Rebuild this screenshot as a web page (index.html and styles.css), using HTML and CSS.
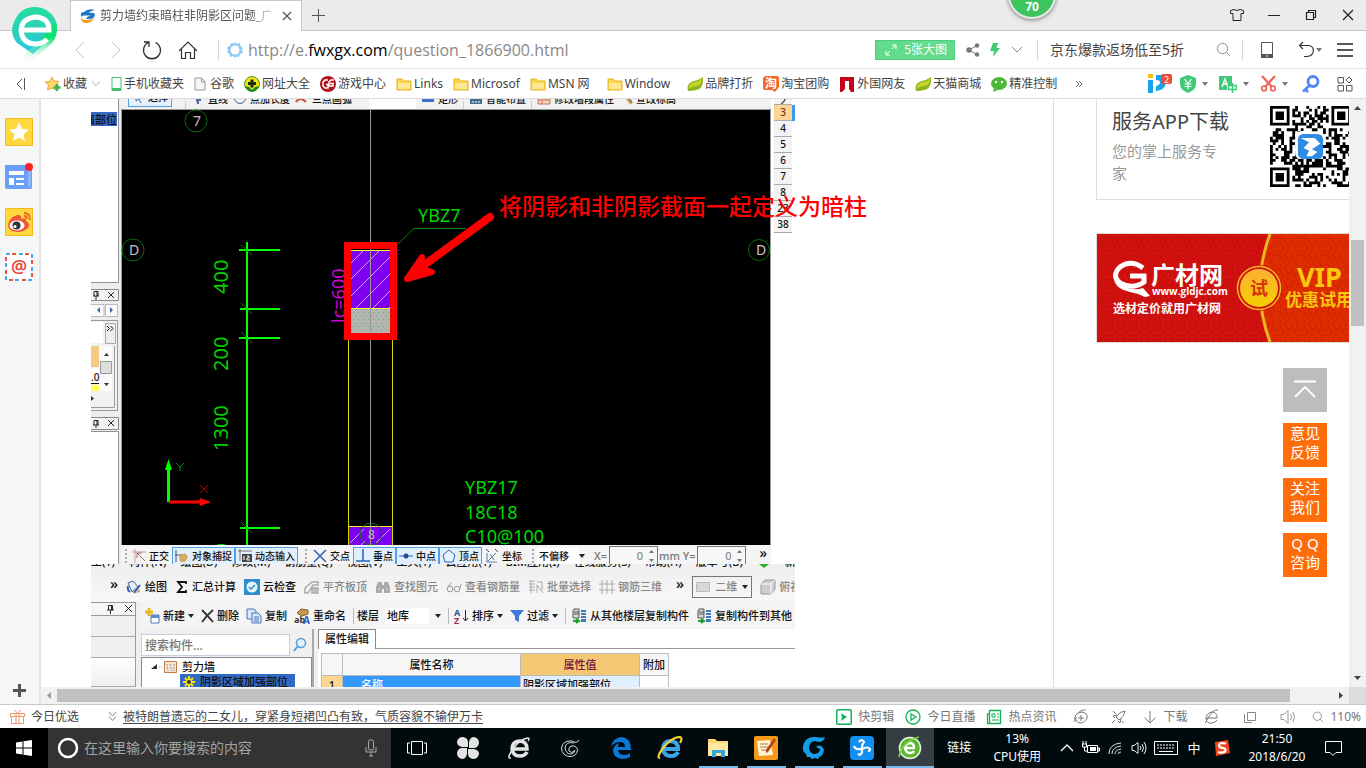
FILE: index.html
```html
<!DOCTYPE html>
<html lang="zh-CN">
<head>
<meta charset="utf-8">
<title>剪力墙约束暗柱非阴影区问题_广联达服务新干线</title>
<link rel="stylesheet" href="styles.css">
</head>
<body>
<svg class="sprite" aria-hidden="true">
  <symbol id="folder" viewBox="0 0 16 16"><path d="M1 3h5l2 2h7v9H1z" fill="#fbd84b" stroke="#e8b021"/><path d="M2 7h12v6H2z" fill="#ffe893"/></symbol>
  <symbol id="caret" viewBox="0 0 6 6"><path d="M0 1h6L3 5z" fill="currentColor"/></symbol>
  <symbol id="chev" viewBox="0 0 12 12"><path d="M1 3l5 5 5-5" fill="none" stroke="currentColor"/></symbol>
  <symbol id="leaf" viewBox="0 0 16 16"><path d="M1 15Q-1 7 7 5q5-1 9-4 1 12-7 13-4 1-8 1z" fill="#8fb31c"/><path d="M2 10q3-4 7-4 4-1 6-4 0 7-5 8-5 0-8 3z" fill="#c8d42e"/></symbol>
  <symbol id="mag" viewBox="0 0 16 16"><circle cx="7" cy="7" r="5.5" fill="none" stroke="currentColor"/><path d="M11 11l4 4" stroke="currentColor"/></symbol>
  <symbol id="floorcopy" viewBox="0 0 16 16"><path d="M3 1h5v9H2V3z" fill="#d8d8d8" stroke="#555"/><path d="M3 4h5M3 6h5" stroke="#555"/><path d="M10 2h5v2h-5zM10 5h5v2h-5zM10 8h5v2h-5zM10 11h5v3h-5z" fill="#3f79b8"/><path d="M2 13h5M5 11l3 2-3 2" stroke="#1ea12e" stroke-width="2" fill="none"/></symbol>
</svg>

<header class="browser">
  <div class="titlebar">
    <div class="tab">
      <svg width="16" height="16" viewBox="0 0 16 16"><path d="M4 4Q8 0 15 2 10 3 9 5q4-1 6 1 0 5-6 5H6q1-3 5-3.500H3Q2 9 1 8 0 4 4 4z" fill="#1d78c8"/><path d="M1 9q2 4 7 3 4 0 6-2-2 5-8 5-5 0-5-6z" fill="#f39a1e"/></svg>
      <span class="tab-title">剪力墙约束暗柱非阴影区问题_广</span>
      <button class="plain" aria-label="关闭标签"><svg width="10" height="10" viewBox="0 0 10 10"><path d="M1 1l8 8M9 1L1 9" stroke="#555" stroke-width="1.3"/></svg></button>
    </div>
    <button class="plain newtab" aria-label="新标签"><svg width="13" height="13" viewBox="0 0 13 13"><path d="M6.500 0v13M0 6.500h13" stroke="#555"/></svg></button>
    <div class="speed">70</div>
    <div class="winbtns">
      <button class="plain" aria-label="皮肤"><svg width="14" height="14" viewBox="0 0 14 14"><path d="M4 1.500q3 2 6 0l3.500 1v3H11v7H3v-7H.5v-3z" fill="none" stroke="#222"/></svg></button>
      <button class="plain" aria-label="最小化"><svg width="14" height="14" viewBox="0 0 14 14"><path d="M1 7.500h12" stroke="#222"/></svg></button>
      <button class="plain" aria-label="还原"><svg width="14" height="14" viewBox="0 0 14 14"><path d="M2.500 4.500h7v7h-7zM4.500 4V2.500h7v7H10" fill="none" stroke="#222" stroke-width="1.200"/></svg></button>
      <button class="plain" aria-label="关闭"><svg width="14" height="14" viewBox="0 0 14 14"><path d="M2 2l10 10M12 2L2 12" stroke="#222" stroke-width="1.300"/></svg></button>
    </div>
  </div>
  <svg class="logo" width="46" height="56" viewBox="0 0 46 56">
    <defs>
      <linearGradient id="lg1" x1="0" y1="0" x2="0" y2="1"><stop offset="0" stop-color="#25dca0"/><stop offset=".5" stop-color="#2bd0b8"/><stop offset="1" stop-color="#27c7ee"/></linearGradient>
      <linearGradient id="lg2" x1="0" y1="0" x2="0" y2="1"><stop offset=".4" stop-color="#0ee271"/><stop offset="1" stop-color="#d8fbe6" stop-opacity="0"/></linearGradient>
    </defs>
    <path d="M2 15Q8 0 23 0q13 0 20 12 3 7 1 15L21 47 5 36Q-3 26 2 15z" fill="url(#lg1)"/>
    <path d="M44 14q4 17-8 26L19 55l-9-1 5-9 18-17z" fill="url(#lg2)"/>
    <path d="M11 23h26q0-12-13-13-14 1-15 13 1 14 15 14 7 0 11-5" fill="none" stroke="#fff" stroke-width="5"/>
  </svg>
  <div class="addressbar">
    <button class="plain" aria-label="后退"><svg width="20" height="20" viewBox="0 0 20 20"><path d="M14 2L6 10l8 8" fill="none" stroke="#c4c4c4"/></svg></button>
    <button class="plain" aria-label="前进"><svg width="20" height="20" viewBox="0 0 20 20"><path d="M6 2l8 8-8 8" fill="none" stroke="#c4c4c4"/></svg></button>
    <button class="plain" aria-label="刷新"><svg width="20" height="20" viewBox="0 0 20 20"><path d="M13.500 2.500a8.500 8.500 0 1 1-7 0M2 2h5v5" fill="none" stroke="#333" stroke-width="1.300"/></svg></button>
    <button class="plain" aria-label="主页"><svg width="20" height="20" viewBox="0 0 20 20"><path d="M1 11l9-9 9 9M3.500 9v9.500h4v-6h5v6h4V9" fill="none" stroke="#333" stroke-width="1.200"/></svg></button>
    <i class="sep url-sep"></i>
    <svg width="16" height="16" viewBox="0 0 16 16"><path d="M8 0l2 2 3-1 .5 3 2.500 2-1 2 1 3-3 1-1 3-3-.5L8 16l-2-2-3 1-.5-3L0 10l1-2-1-3 3-1 1-3 3 .5z" fill="#8ecbf6"/><circle cx="8" cy="8" r="4.500" fill="#fff"/></svg>
    <div class="url" role="textbox" aria-label="地址" contenteditable="true">http://e.<b>fwxgx.com</b>/question_1866900.html</div>
    <button class="bigpics"><svg width="12" height="12" viewBox="0 0 12 12"><path d="M7 1h4v4M11 1L7 5M1 7v4h4M1 11l4-4" fill="none" stroke="#fff"/></svg>5张大图</button>
    <button class="plain c22" aria-label="分享"><svg width="14" height="14" viewBox="0 0 14 14"><path d="M11 2.500L3 7l8 4.500" fill="none" stroke="#777"/><circle cx="11" cy="2.500" r="2.200" fill="#777"/><circle cx="3" cy="7" r="2.700" fill="#777"/><circle cx="11" cy="11.500" r="2.200" fill="#777"/></svg></button>
    <button class="plain c22" aria-label="加速"><svg width="12" height="14" viewBox="0 0 12 14"><path d="M4 0h5L7.500 5H11L4 14l1-6H1z" fill="#3ecb6b"/></svg></button>
    <button class="plain c22 grey" aria-label="更多"><svg width="12" height="12"><use href="#chev"/></svg></button>
    <i class="sep search-sep"></i>
    <input class="search" aria-label="搜索" value="京东爆款返场低至5折">
    <button class="plain c38 grey" aria-label="搜索"><svg width="15" height="15"><use href="#mag"/></svg></button>
    <i class="sep"></i>
    <button class="plain c48" aria-label="手机"><svg width="14" height="18" viewBox="0 0 14 18"><path d="M1.500 1.500h11v15h-11z" fill="none" stroke="#555"/><path d="M1 13h12v4H1z" fill="#555"/><path d="M6 15h2" stroke="#fff"/></svg></button>
    <button class="plain c38 dark" aria-label="撤销"><svg width="18" height="18" viewBox="0 0 18 18"><path d="M5 1L1.500 4.500 5 8M2 4.500h8q5 0 5.500 5Q15 15 9 15.500H6" fill="none" stroke="#333" stroke-width="1.200"/></svg><svg class="cr" width="6" height="6"><use href="#caret"/></svg></button>
    <button class="plain c32" aria-label="菜单"><svg width="16" height="16" viewBox="0 0 16 16"><path d="M0 2h16M0 8h16M0 14h16" stroke="#222" stroke-width="1.300"/></svg></button>
  </div>
  <nav class="bookmarks">
    <button class="plain hide" aria-label="收起"><svg width="10" height="12" viewBox="0 0 10 12"><path d="M6 1L1 6l5 5M8.500 0v12" fill="none" stroke="#555"/></svg></button>
    <a href="#"><svg width="16" height="16" viewBox="0 0 16 16"><path d="M7 1l2 4 5 .6L10.500 9l1 5L7 12l-4.500 2 1-5L0 6l5-.7z" fill="#ffd96a" stroke="#eba63f"/><path d="M12 8v7M8.500 11.500h7" stroke="#3cb54a" stroke-width="2.500"/></svg>收藏<svg class="drop" width="10" height="10"><use href="#chev"/></svg></a>
    <a href="#"><svg width="11" height="16" viewBox="0 0 11 16"><path d="M1 1.500h9v13H1z" fill="#fff" stroke="#41c071"/><path d="M1 12h9v2.500H1z" fill="#41c071"/></svg>手机收藏夹</a>
    <a href="#"><svg class="page" width="12" height="14" viewBox="0 0 12 14"><path d="M1 1h6.500L11 4.500V13H1zM7.500 1v4H11" fill="#f6f6f6" stroke="#999"/></svg>谷歌</a>
    <a href="#"><svg width="16" height="16" viewBox="0 0 16 16"><circle cx="8" cy="8" r="7.500" fill="#f5df10" stroke="#4a9a20"/><path d="M1 10q2 5 7 5.500 5-.5 7-5.500l-4 1-3 3-3-3z" fill="#118b32"/><path d="M8 3.500v8M4 7.500h8" stroke="#153015" stroke-width="3"/></svg>网址大全</a>
    <a href="#"><svg width="16" height="16" viewBox="0 0 16 16"><circle cx="8" cy="8" r="8" fill="#b3101b"/><path d="M8 4H5L3 6v4l2 2h3V8.500H6M14 4h-3L9 6v4h4V7.500h-3" fill="none" stroke="#fff" stroke-width="1.500"/></svg>游戏中心</a>
    <a href="#"><svg width="16" height="16"><use href="#folder"/></svg>Links</a>
    <a href="#"><svg width="16" height="16"><use href="#folder"/></svg>Microsof</a>
    <a href="#" class="pad"><svg width="16" height="16"><use href="#folder"/></svg>MSN 网</a>
    <a href="#" class="pad"><svg width="16" height="16"><use href="#folder"/></svg>Window</a>
    <a href="#"><svg width="16" height="16"><use href="#leaf"/></svg>品牌打折</a>
    <a href="#"><svg width="16" height="16" viewBox="0 0 16 16"><path d="M2 0h12q2 0 2 2v9l-4 5-3-2H2q-2 0-2-2V2z" fill="#f4682a"/><text x="2" y="12" font-size="12" font-weight="700" fill="#fff">淘</text></svg>淘宝团购</a>
    <a href="#"><svg width="16" height="16" viewBox="0 0 16 16"><path d="M1 1h14v15h-3l-2-3V5H6v8l-3 3H1z" fill="#c1061a"/></svg>外国网友</a>
    <a href="#"><svg width="16" height="16"><use href="#leaf"/></svg>天猫商城</a>
    <a href="#"><svg width="16" height="16" viewBox="0 0 16 16"><ellipse cx="8" cy="7.500" rx="8" ry="6.500" fill="#4db838"/><path d="M3 12l-1 4 5-2z" fill="#4db838"/><circle cx="5" cy="6" r="1.200" fill="#fff"/><circle cx="11" cy="6" r="1.200" fill="#fff"/></svg>精准控制</a>
    <button class="plain more" aria-label="更多书签"><svg width="8" height="8" viewBox="0 0 8 8"><path d="M1 1l3 3-3 3M4 1l3 3-3 3" fill="none" stroke="#666"/></svg></button>
    <div class="tools">
      <button class="plain c28" aria-label="iP"><svg width="24" height="20" viewBox="0 0 24 20"><path d="M0 0h5v4H0z" fill="#f8bd12"/><path d="M0 6h5v13H0z" fill="#17a4ea"/><path d="M8 1h5v5l5 3q-1 7-10 8v-5q4-1 4-4 0-2-4-2z" fill="#17a4ea"/><rect x="13" y="0" width="11" height="10" rx="2" fill="#ee4d35"/><text x="16" y="9" font-size="9" fill="#fff">2</text></svg></button>
      <button class="plain c40" aria-label="支付"><svg width="16" height="18" viewBox="0 0 16 18"><path d="M8 0l8 3v6q0 6-8 9-8-3-8-9V3z" fill="#3fc978"/><path d="M4.500 4L8 8.500 11.500 4M8 8v6M4.500 9h7M4.500 11.500h7" fill="none" stroke="#fff" stroke-width="1.200"/></svg><svg class="cr" width="6" height="6"><use href="#caret"/></svg></button>
      <button class="plain c40" aria-label="翻译"><svg width="18" height="18" viewBox="0 0 18 18"><path d="M0 1h13v9H8v5H0z" fill="#3fc978"/><path d="M3 12L6 4l3 8M4 9h4" fill="none" stroke="#fff" stroke-width="1.400"/><path d="M9.500 10.500h8v4h-8zM13.500 8v10" fill="none" stroke="#3fc978" stroke-width="1.600"/></svg><svg class="cr" width="6" height="6"><use href="#caret"/></svg></button>
      <button class="plain c40" aria-label="截图"><svg width="15" height="17" viewBox="0 0 15 17"><path d="M1 1l10 11M14 1L4 12" stroke="#f2675c" stroke-width="2.400"/><circle cx="3" cy="13.500" r="2.300" fill="none" stroke="#f2675c" stroke-width="1.800"/><circle cx="12" cy="13.500" r="2.300" fill="none" stroke="#f2675c" stroke-width="1.800"/></svg><svg class="cr" width="6" height="6"><use href="#caret"/></svg></button>
      <button class="plain c34" aria-label="密码"><svg width="18" height="18" viewBox="0 0 18 18"><circle cx="11" cy="6.500" r="5" fill="none" stroke="#4f86f7" stroke-width="2.800"/><path d="M7.500 10.500L1 16.500M3 14l3 3" stroke="#4f86f7" stroke-width="2.600"/></svg></button>
      <button class="plain c34" aria-label="扩展"><svg width="16" height="16" viewBox="0 0 16 16"><path d="M1 1.500h5.500V7H1zM1 9.500h5.500V15H1zM9.500 9.500H15V15H9.500zM12 1l3 3-3 3-3-3z" fill="none" stroke="#555"/></svg></button>
    </div>
  </nav>
</header>

<div class="workspace">
  <aside class="rail">
    <button class="plain" aria-label="收藏"><svg width="28" height="28" viewBox="0 0 28 28"><path d="M.5.5h27v27H.5z" fill="#ffd83f" stroke="#f6b71f"/><path d="M14 4l3 7 7 .6-5.500 4.800L20 23l-6-3.500L8 23l1.500-6.600L4 11.600l7-.6z" fill="#fff"/></svg></button>
    <button class="plain" aria-label="新闻"><svg width="28" height="28" viewBox="0 0 28 28"><path d="M0 2h27v23q0 1-2 1H2q-2 0-2-2z" fill="#6b9ffb"/><path d="M23 5h3v19h-3z" fill="#8db6fd"/><path d="M4 8h15v4H4zM4 15h5v7H4zM11 15h8v2h-8zM11 20h8v2h-8z" fill="#fff"/><circle cx="24" cy="4" r="4" fill="#ff2222"/></svg></button>
    <button class="plain" aria-label="微博"><svg width="28" height="28" viewBox="0 0 28 28"><path d="M.5.5h27v27H.5z" fill="#ffd83f" stroke="#f6b71f"/><path d="M3 17Q5 8 13 7q4 0 3 4 6-2 5 2 5 3 2 7-4 4-11 4-9-1-9-7z" fill="#f0553a"/><ellipse cx="12" cy="17.500" rx="7.500" ry="5" fill="#fff"/><circle cx="11.500" cy="17.500" r="4" fill="#333"/><circle cx="10" cy="18.500" r="1.500" fill="#fff"/><path d="M19 5q6 0 6 7M19 8q3 0 3 3" fill="none" stroke="#e6682d" stroke-width="1.800"/></svg></button>
    <button class="plain" aria-label="邮箱"><svg width="28" height="28" viewBox="0 0 28 28"><path d="M0 0h28v28H0z" fill="#fff"/><g fill="none" stroke-width="2"><rect x="1" y="1" width="26" height="26" stroke="#49a7f0" stroke-dasharray="4 9"/><rect x="1" y="1" width="26" height="26" stroke="#f0513c" stroke-dasharray="4 9" stroke-dashoffset="-6"/></g><text x="6" y="20" font-size="18" font-weight="600" fill="#e84a37">@</text></svg></button>
    <button class="plain add" aria-label="添加"><svg width="13" height="13" viewBox="0 0 13 13"><path d="M6.500 0v13M0 6.500h13" stroke="#555" stroke-width="3"/></svg></button>
  </aside>

  <main class="viewport">
    <div class="pagewrap">
      <article class="answer">
        <figure class="shot">
          <div class="cad">
            <svg class="dock" width="30" height="465" viewBox="91 99 30 465">
              <path d="M91 99h30v465H91z" fill="#ededed"/>
              <path d="M91 99h27v183H91zM91 432h27v132H91z" fill="#fff"/>
              <path d="M118.500 99v183.500H91M118.500 564V431.500H91" fill="none" stroke="#8f9099"/>
              <path d="M91 112h26v14H91z" fill="#316ac5"/>
              <text x="84" y="123.500" font-size="11" fill="#111">强部位</text>
              <g fill="none" stroke="#8b8b8b"><path d="M90 289.500h28.500v11H90zM90 417.500h28.500v12H90z" fill="#f3f3f3"/><path d="M90 304.500h14v12H90zM105.500 304.500h12v12h-12z" fill="#fafafa" stroke="#bbb"/></g>
              <g fill="none" stroke="#222"><path d="M108 292l6 6M114 292l-6 6M93 296h6M94 296v-4.500h4V296M97 291v5M96 296v4M108 420l6 6M114 420l-6 6M93 425h6M94 425v-4.500h4V425M97 420v5M96 425v3"/></g>
              <path d="M100 307v6l-3-3zM110 307v6l3-3z" fill="#3568a8"/>
              <path d="M91 320.500h26.500v90H91" fill="#f1f1f1" stroke="#999"/>
              <path d="M91 322h12v21H91zM91 368h8v16h-8z" fill="#fff"/>
              <path d="M105.500 323.500h10v20h-10z" fill="#eee" stroke="#aaa"/>
              <path d="M107 326l2.500 2.500-2.500 2.500M110.500 326l2.500 2.500-2.500 2.500" fill="none" stroke="#111"/>
              <path d="M91 346h8v21h-8z" fill="#f5c983"/><path d="M91 385h8v6h-8z" fill="#ffff66"/><path d="M91 383.500h8" stroke="#111"/>
              <path d="M99 346h13v45H99z" fill="#fafafa"/><path d="M100.500 361.500h11v12h-11z" fill="#ddd" stroke="#999"/>
              <path d="M104 356h5l-2.500-3zM104 383h5l-2.500 3zM91 396v5l3-2.500z" fill="#333"/>
              <text x="91" y="381" font-size="10" fill="#111">.0</text>
              <path d="M91 407.500h23.500V346" fill="none" stroke="#999"/>
            </svg>
            <div class="stage">
              <div class="topbar">
                <b class="on"><svg width="14" height="12" viewBox="0 0 14 12"><path d="M5 0v10l3-2 2 4" fill="none" stroke="#4a6fa5"/></svg>选择</b><i></i><b><svg width="14" height="12" viewBox="0 0 14 12"><path d="M4 3h6v5H8v3H6z" fill="#5470a5"/></svg>直线</b><b><svg width="14" height="12" viewBox="0 0 14 12"><circle cx="7" cy="5" r="5.500" fill="none" stroke="#3e5c96"/><path d="M7 0v6" stroke="#3e5c96"/></svg>点加长度</b><b><svg width="14" height="12" viewBox="0 0 14 12"><path d="M1 9q4-6 10 0" fill="none" stroke="#c85545" stroke-width="2"/></svg>三点画弧</b><span class="well"></span><b><svg width="14" height="12" viewBox="0 0 14 12"><path d="M1 2h12v7H1z" fill="#3b6fd0"/></svg>矩形</b><i></i><b><svg width="14" height="12" viewBox="0 0 14 12"><path d="M1 2h12v9H1z" fill="#4a6a90"/><path d="M3 9h2M6 9h2M9 9h2M6 4h5" stroke="#fff"/></svg>智能布置</b><i></i><b><svg width="14" height="12" viewBox="0 0 14 12"><path d="M1 2h12v9H1z" fill="#f6d3bb" stroke="#c7764f"/><path d="M1 7h12M5 7v4M9 3v4" stroke="#c7764f"/></svg>修改墙段属性</b><b><svg width="14" height="12" viewBox="0 0 14 12"><path d="M2 3h6l5 7" fill="none" stroke="#6f7590" stroke-width="2"/><path d="M8 6l4 5" stroke="#dba33a" stroke-width="2"/></svg>查改标高</b>
              </div>
              <svg class="drawing" width="650" height="436" viewBox="121 109 650 436">
                <defs>
                  <pattern id="dots" width="5" height="7" patternUnits="userSpaceOnUse"><path d="M1 1h1v1H1zM3 4h1v1H3z" fill="#4fc04f"/></pattern>
                  <clipPath id="hatchclip"><path d="M351 250h39v58h-39z"/></clipPath>
                </defs>
                <path d="M121 109h650v436H121z" fill="#000"/>
                <path d="M121 109.500h649.500V545" fill="none" stroke="#999"/>
                <path d="M121.500 109v436" stroke="#999"/>
                <g fill="none" stroke="#0b6b0b"><circle cx="196" cy="121" r="11"/><circle cx="133" cy="250" r="11"/><circle cx="759" cy="250" r="10.500"/></g>
                <g class="axis" fill="#c6c6c6"><text x="193" y="126">7</text><text x="129" y="255">D</text><text x="756" y="255">D</text></g>
                <g stroke="#0f0" stroke-width="2"><path d="M247 242v303M239 250h41M240 309h40M239 338h41M240 528h40"/></g>
                <g stroke="#0a7a0a"><path d="M241 245l11 10M241 303l11 11M241 332l11 11M241 522l11 11"/></g>
                <g class="dim" fill="#00d000"><text transform="translate(228 294) rotate(-90)">400</text><text transform="translate(228 371) rotate(-90)">200</text><text transform="translate(228 451) rotate(-90)">1300</text><text transform="translate(228 566) rotate(-90)">00</text></g>
                <text class="lbl" fill="#d400d4" transform="translate(345 323) rotate(-90)">lc=600</text>
                <path d="M397 245l17-16.500h52" fill="none" stroke="#0a8a0a"/>
                <g class="lbl" fill="#00d800"><text x="418" y="222">YBZ7</text><text x="465" y="494">YBZ17</text><text x="465" y="519">18C18</text><text x="465" y="543">C10@100</text></g>
                <path d="M348.500 340v205M392.500 340v205" stroke="#d8d800"/>
                <path d="M349 527h43v18h-43z" fill="#7d00f0"/><path d="M348 526.500h45" stroke="#ee3"/><path d="M350 543l14-14M376 543l14-14M361 545l4-4" stroke="#c9a6ff"/>
                <circle cx="371" cy="534" r="11" fill="none" stroke="#0b6b0b"/><text x="368" y="539" font-size="12" fill="#c6c6c6">8</text>
                <path d="M348 246h45v91h-45z" fill="#000"/>
                <path d="M351 250h39v58h-39z" fill="#7d00f0"/>
                <path d="M351 309h39v24h-39z" fill="#b4b4b4"/><path d="M351 309h39v24h-39z" fill="url(#dots)"/>
                <path clip-path="url(#hatchclip)" d="M350 264l16-16M350 280l32-32M350 297l42-42M354 310l38-38M371 310l21-21M387 310l6-6" stroke="#c6a5ff"/>
                <path d="M351 250.500h39M351 308.500h39" stroke="#ffff30"/>
                <path d="M370.500 109v436" stroke="#999"/>
                <path d="M347.500 245.500h46v91h-46z" fill="none" stroke="#f00" stroke-width="7"/>
                <path d="M490 217l-74 54" stroke="#f00" stroke-width="8" stroke-linecap="round"/>
                <path d="M422 257l-15 22 25-7-9-3z" fill="#f00" stroke="#f00" stroke-width="6" stroke-linejoin="round"/>
                <path d="M168.500 502v-34" stroke="#0f0" stroke-width="3"/><path d="M165 470l3.500-11 3.500 11z" fill="#0f0"/>
                <path d="M169 502h34" stroke="#f00" stroke-width="3"/><path d="M200 498l11 4-11 4z" fill="#f00"/>
                <path d="M176 463l4 4 4-4M180 467v4" fill="none" stroke="#0a8a0a"/><path d="M200 485l8 8M208 485l-8 8" stroke="#b00000"/>
              </svg>
              <div class="snapbar">
                <i class="grip"></i>
                <button><svg width="14" height="14" viewBox="0 0 14 14"><path d="M0 3h14M3 0v14" stroke="#c99"/><path d="M5 4l8 8M5 4v5M5 4h5" stroke="#a66" fill="none"/></svg>正交</button>
                <button class="on"><svg width="14" height="14" viewBox="0 0 14 14"><path d="M1 1v12M0 6h8" stroke="#555"/><path d="M4 8l6-4 3 4-3 5H5z" fill="#d9ab5b"/></svg>对象捕捉</button>
                <button class="on"><svg width="14" height="14" viewBox="0 0 14 14"><path d="M0 2h14M2 0v12" stroke="#777"/><path d="M4 5h10v8H4z" fill="#444"/><path d="M6 7v4M9 7h2v2H9v2h3" stroke="#fff" fill="none"/></svg>动态输入</button>
                <i class="grip"></i>
                <button><svg width="14" height="14" viewBox="0 0 14 14"><path d="M1 1l12 12M13 1L1 13" stroke="#2d62b5" stroke-width="1.500"/></svg>交点</button>
                <button class="on"><svg width="14" height="14" viewBox="0 0 14 14"><path d="M7 0v12M0 12h14" stroke="#2d62b5" stroke-width="1.500"/></svg>垂点</button>
                <button class="on"><svg width="14" height="14" viewBox="0 0 14 14"><path d="M0 7h14" stroke="#2d62b5"/><circle cx="7" cy="7" r="2.500" fill="#234a91"/></svg>中点</button>
                <button class="on"><svg width="14" height="14" viewBox="0 0 14 14"><path d="M7 1l6 5-2 7H3L1 6z" fill="#e8f2ff" stroke="#2d62b5"/></svg>顶点</button>
                <button><svg width="14" height="14" viewBox="0 0 14 14"><path d="M2 4v9h10M3 12l8-8M5 5l4 6" stroke="#557fb5" fill="none"/><path d="M1 0l3 3M10 0l3 3" stroke="#444"/></svg>坐标</button>
                <i class="grip"></i>
                <select aria-label="偏移"><option>不偏移</option></select><svg class="cr" width="6" height="6"><use href="#caret"/></svg>
                <label class="num">X=<input value="0"><svg width="5" height="14" viewBox="0 0 5 14"><path d="M0 4h5L2.500 1zM0 10h5l-2.500 3z" fill="#777"/></svg></label><label class="num">mm Y=<input value="0"><svg width="5" height="14" viewBox="0 0 5 14"><path d="M0 4h5L2.500 1zM0 10h5l-2.500 3z" fill="#777"/></svg></label>
                <span class="chevs">»</span>
              </div>
            </div>
            <table class="rows"><tbody>
              <tr class="cut"><td>2</td><td></td></tr><tr class="sel"><td>3</td><td></td></tr><tr><td>4</td><td></td></tr><tr><td>5</td><td></td></tr><tr><td>6</td><td></td></tr><tr><td>7</td><td></td></tr><tr><td>8</td><td></td></tr><tr><td>23</td><td></td></tr><tr><td>38</td><td></td></tr>
            </tbody></table>
          </div>
          <figcaption class="note">将阴影和非阴影截面一起定义为暗柱</figcaption>

          <div class="lower">
            <div class="menubar"><span>工(T)</span><span>构件(N)</span><span>绘图(D)</span><span>修改(M)</span><span>钢筋量(Q)</span><span>视图(V)</span><span>工具(T)</span><span>云应用(Y)</span><span>BIM应用(I)</span><span>在线服务(S)</span><span>帮助(H)</span><span>版本号(B)</span><svg width="14" height="8" viewBox="0 0 14 8"><path d="M2 4h10L7 8z" fill="#3aab2a"/></svg><span>新建变更</span></div>
            <div class="toolrow first">
              <span class="lead">»</span>
              <button><svg width="16" height="16" viewBox="0 0 16 16"><path d="M2 4l5-2 5 6-6 5z" fill="#e8eef8" stroke="#4a6285"/><path d="M4 13q-3-2-2-6M14 6l-6 8" stroke="#2f62b0" stroke-width="2" fill="none"/><path d="M10 14l4-1-1-3z" fill="#e0a030"/></svg>绘图</button>
              <button><svg width="14" height="16" viewBox="0 0 14 16"><path d="M11 5V3H3l4 5-4 5h8v-2" fill="none" stroke="#111" stroke-width="1.800"/></svg>汇总计算</button>
              <button><svg width="16" height="16" viewBox="0 0 16 16"><path d="M0 0h16v16H0z" fill="#2f8fce"/><circle cx="8" cy="8" r="5.500" fill="#e8f5fd"/><path d="M5 8l2 2 4-4" stroke="#2f8fce" stroke-width="1.500" fill="none"/></svg>云检查</button>
              <button class="off"><svg width="16" height="16" viewBox="0 0 16 16"><path d="M1 9l7-6h6v3H9l-5 8H1zM8 9h6v5H8zM10 9v5M12 9v5" fill="none" stroke="#aaa" stroke-width="1.500"/></svg>平齐板顶</button>
              <button class="off"><svg width="16" height="16" viewBox="0 0 16 16"><path d="M3 3h4v11H1V8zM9 3h4l2 5v6H9zM7 6h2v4H7z" fill="#aaa"/><path d="M3 10h2M11 10h2" stroke="#eee"/></svg>查找图元</button>
              <button class="off"><svg width="16" height="16" viewBox="0 0 16 16"><circle cx="4" cy="10" r="2.800" fill="none" stroke="#999"/><circle cx="11" cy="10" r="2.800" fill="none" stroke="#999"/><path d="M2 8l3-4M14 9l1-4" stroke="#999"/></svg>查看钢筋量</button>
              <button class="off"><svg width="16" height="16" viewBox="0 0 16 16"><path d="M1 2h6M1 5h6M1 8h6M1 11h6M3 2v12M9 6l6 8M9 3h5v8M9 6v8" fill="none" stroke="#aaa"/></svg>批量选择</button>
              <button class="off"><svg width="16" height="16" viewBox="0 0 16 16"><path d="M3 1v14M8 1v14M13 1v14M0 5h16M0 11h16" stroke="#aaa"/></svg>钢筋三维</button>
              <span class="chev2">»</span>
              <button class="off boxed"><svg width="14" height="10" viewBox="0 0 14 10"><path d="M.5.5h13v9H.5z" fill="#d8d8d8" stroke="#bbb"/></svg>二维<svg class="cr" width="6" height="6"><use href="#caret"/></svg></button>
              <button class="off"><svg width="16" height="16" viewBox="0 0 16 16"><path d="M1 5l4-4h10v9l-4 5H1z" fill="#ccc" stroke="#999"/><path d="M1 5h10v10M11 5l4-4" fill="none" stroke="#fff"/></svg>俯视</button>
            </div>
            <div class="panes">
              <div class="leftpane"><div class="cap"><svg width="26" height="12" viewBox="0 0 26 12"><path d="M1 7h7M2.500 7V2.500h4V7M5.500 2v5M4.500 7v4M19 2l7 7M26 2l-7 7" stroke="#222" fill="none"/></svg></div><p></p><p></p><p></p></div>
              <div class="rightpane">
                <div class="toolrow second">
                  <button><svg width="16" height="16" viewBox="0 0 16 16"><path d="M5 0v8M1 4h8" stroke="#e5bd2b" stroke-width="3"/><path d="M7 7h8v8H7z" fill="#fff" stroke="#5077b0"/><path d="M7 7h8v3H7z" fill="#5b8ed0"/></svg>新建<svg class="cr" width="6" height="6"><use href="#caret"/></svg></button>
                  <button><svg width="13" height="14" viewBox="0 0 13 14"><path d="M1 1q5 5 11 12M12 1Q6 6 1 13" stroke="#333" stroke-width="1.800" fill="none"/></svg>删除</button>
                  <button><svg width="16" height="16" viewBox="0 0 16 16"><path d="M1 1h7l2 2v8H1z" fill="#dce8fa" stroke="#4a72b5"/><path d="M6 5h6l3 3v7H6z" fill="#dce8fa" stroke="#4a72b5"/><path d="M8 9h5M8 11h5M8 13h5" stroke="#4a72b5"/></svg>复制</button>
                  <button><svg width="16" height="16" viewBox="0 0 16 16"><path d="M3 5l4-4 7 1v4L8 8z" fill="#c49a44" stroke="#7f6434"/><text x="0" y="15" font-size="9" font-weight="700" fill="#333">ab</text><text x="9" y="16" font-size="10" font-weight="700" fill="#2b5dc0">A</text></svg>重命名</button>
                  <label class="floor">楼层 <select aria-label="楼层"><option>地库</option></select><svg class="cr" width="6" height="6"><use href="#caret"/></svg></label>
                  <button class="bar"><svg width="15" height="16" viewBox="0 0 15 16"><text x="0" y="8" font-size="9" font-weight="700" fill="#2c4fa0">A</text><text x="0" y="16" font-size="9" font-weight="700" fill="#a03050">Z</text><path d="M11.500 2v11M9 10l2.500 3 2.500-3" stroke="#222" fill="none"/></svg>排序<svg class="cr" width="6" height="6"><use href="#caret"/></svg></button>
                  <button><svg width="14" height="14" viewBox="0 0 14 14"><path d="M0 1h14L9 7v6l-4-2V7z" fill="#3f7bd9"/></svg>过滤<svg class="cr" width="6" height="6"><use href="#caret"/></svg></button>
                  <button class="bar"><svg width="16" height="16"><use href="#floorcopy"/></svg>从其他楼层复制构件</button>
                  <button><svg width="16" height="16"><use href="#floorcopy"/></svg>复制构件到其他</button>
                </div>
                <div class="split">
                  <div class="tree">
                    <div class="find"><input aria-label="搜索构件" placeholder="搜索构件..."><svg width="16" height="16" viewBox="0 0 16 16"><circle cx="9" cy="6" r="4.500" fill="#e3f3fd" stroke="#4fa0d8" stroke-width="1.500"/><path d="M5.500 9.500L2 14" stroke="#4fa0d8" stroke-width="2"/></svg></div>
                    <div class="nodes">
                      <div class="node"><svg width="28" height="14" viewBox="0 0 28 14"><path d="M1 9h6V4z" fill="#333"/><path d="M9 7h4" stroke="#999" stroke-dasharray="1 1"/><path d="M14.500 1.500h12v11h-12z" fill="#f7e4d2" stroke="#c27a4a"/><path d="M17 4l1 7M20 4l2 7M24 4v7" stroke="#999" stroke-dasharray="2 1"/></svg>剪力墙</div>
                      <div class="node leafnode"><span><svg width="14" height="14" viewBox="0 0 14 14"><path d="M7 1v12M1 7h12M3 3l8 8M11 3l-8 8" stroke="#ffe800" stroke-width="2"/><circle cx="7" cy="7" r="2" fill="#333"/></svg>阴影区域加强部位</span></div>
                    </div>
                  </div>
                  <div class="props">
                    <div class="tabs"><span>属性编辑</span></div>
                    <table><thead><tr><th></th><th>属性名称</th><th class="hot">属性值</th><th>附加</th></tr></thead><tbody><tr><td class="n">1</td><td class="name">名称</td><td class="val">阴影区域加强部位</td><td></td></tr></tbody></table>
                  </div>
                </div>
              </div>
            </div>
          </div>
        </figure>
      </article>

      <aside class="side">
        <section class="app">
          <div><h2>服务APP下载</h2><p>您的掌上服务专家</p></div>
          <svg class="qr" width="81" height="81" viewBox="0 0 29 29"><path id="qr" fill="#000"/><rect x="9" y="9" width="10" height="10" rx="2" fill="#fff"/><rect x="10" y="10" width="9" height="9" rx="2" fill="#2e8be6"/><path d="M11 11.500h5l2 2-3 2 2 1-2 1.500h-2l1-2-2-1 2-2z" fill="#fff"/></svg>
        </section>
        <a href="#" class="banner" aria-label="广材网">
          <svg width="300" height="108" viewBox="0 0 300 108">
            <defs>
              <pattern id="swirl" width="24" height="14" patternUnits="userSpaceOnUse"><g fill="none" stroke="#7a0000" stroke-opacity=".16"><circle cx="12" cy="14" r="11"/><circle cx="12" cy="14" r="7"/><circle cx="12" cy="14" r="3"/><circle cx="0" cy="7" r="9"/><circle cx="24" cy="7" r="9"/><circle cx="0" cy="7" r="4"/><circle cx="24" cy="7" r="4"/></g></pattern>
              <linearGradient id="gold" x1="0" y1="0" x2="0" y2="1"><stop offset="0" stop-color="#fbb034"/><stop offset="1" stop-color="#f4d000"/></linearGradient>
            </defs>
            <path d="M0 0h300v108H0z" fill="#d3110f"/>
            <path d="M173 0q-20 54 0 108h127V0z" fill="#e22d00"/>
            <path d="M0 0h300v108H0z" fill="url(#swirl)"/>
            <path d="M173 0q-20 54 0 108" fill="none" stroke="#e9b81f" stroke-width="3"/>
            <circle cx="162" cy="54" r="23" fill="#d3110f"/><circle cx="162" cy="54" r="21.500" fill="none" stroke="#f1b822" stroke-width="1.500"/><circle cx="162" cy="54" r="19" fill="url(#gold)"/>
            <text x="153" y="61" font-size="18" font-weight="700" fill="#d8330a">试</text>
            <path d="M46 34Q34 25 23 33q-9 9 0 16 13 7 24-1v-6H33" fill="none" stroke="#fff" stroke-width="5"/><path d="M17 40q-2 14 16 18l8 2 7 3 5-1-7-8q-9 3-18-1-8-4-11-13z" fill="#fff"/>
            <g fill="#fff" font-weight="700"><text x="54" y="50" font-size="24">广材网</text><text class="site" x="55" y="61" font-size="10">www.gldjc.com</text><text x="16" y="79" font-size="12">选材定价就用广材网</text></g>
            <g fill="#f9c80e" font-weight="700"><text x="200" y="53" font-size="27">VIP</text><text x="188" y="72" font-size="17">优惠试用</text></g>
          </svg>
        </a>
      </aside>
      <div class="floaters">
        <button class="totop" aria-label="回到顶部"><svg width="24" height="20" viewBox="0 0 24 20"><path d="M1 1.500h22M2 17l10-10 10 10" fill="none" stroke="#fff" stroke-width="1.800"/></svg></button>
        <button>意见<br>反馈</button><button>关注<br>我们</button><button>Q Q<br>咨询</button>
      </div>
    </div>
    <div class="vbar"><svg width="9" height="6" viewBox="0 0 9 6"><path d="M1 5h7L4.500 1z" fill="#444"/></svg><i></i><svg width="9" height="6" viewBox="0 0 9 6"><path d="M1 1h7L4.500 5z" fill="#444"/></svg></div>
    <div class="hbar"><svg width="6" height="9" viewBox="0 0 6 9"><path d="M5 1v7L1 4.500z" fill="#999"/></svg><i></i><svg width="6" height="9" viewBox="0 0 6 9"><path d="M1 1v7l4-3.500z" fill="#444"/></svg></div>
    <div class="corner"></div>
  </main>
</div>

<footer class="status">
  <a href="#" class="pick"><svg width="15" height="15" viewBox="0 0 15 15"><path d="M.5 4.500h14v3H.5zM1.500 7.500h12v7h-12zM6 4v10M9 4v10M7.500 4L4 1M7.500 4L11 1" fill="none" stroke="#f1966f"/></svg>今日优选</a>
  <svg class="dd" width="9" height="9" viewBox="0 0 9 9"><path d="M1 0l3.500 4L8 0M1 4.500l3.500 4 3.500-4" fill="none" stroke="#888"/></svg>
  <a href="#" class="news">被特朗普遗忘的二女儿，穿紧身短裙凹凸有致，气质容貌不输伊万卡</a>
  <div class="st">
    <button class="plain"><svg width="16" height="16" viewBox="0 0 16 16"><rect x=".75" y=".75" width="14.500" height="14.500" rx="1" fill="none" stroke="#14b356" stroke-width="1.500"/><path d="M5 4l6 4-6 4 1-4z" fill="#14b356"/></svg>快剪辑</button>
    <button class="plain"><svg width="16" height="16" viewBox="0 0 16 16"><circle cx="8" cy="8" r="7" fill="none" stroke="#14b356" stroke-width="1.300"/><path d="M6 5l5 3-5 3z" fill="none" stroke="#14b356" stroke-width="1.300"/></svg>今日直播</button>
    <button class="plain"><svg width="16" height="16" viewBox="0 0 16 16"><path d="M3.500 1.500h11v13H1.500V5h2zM3.500 5v9" fill="none" stroke="#14b356" stroke-width="1.300"/><path d="M6 5h3v3H6zM11 5h2M11 8h2M6 11h7" stroke="#14b356" fill="none"/></svg>热点资讯</button>
    <button class="plain w27" aria-label="医生"><svg width="16" height="16" viewBox="0 0 16 16"><path d="M2 13Q0 4 9 3q6 1 5 6-2 5-7 5-5-1-4-6M3 6q5-6 10-5M8 6v6M5 9h6" fill="none" stroke="#777"/></svg></button>
    <button class="plain w27" aria-label="加速"><svg width="16" height="16" viewBox="0 0 16 16"><path d="M14 2q-5 0-9 6l3 3q6-4 6-9zM6 6L2 7l2 2M10 10l-1 4-2-2M4 11l-3 3M2 2l3 3M11 12l2 2" fill="none" stroke="#777"/></svg></button>
    <button class="plain"><svg width="14" height="14" viewBox="0 0 14 14"><path d="M7 1v12M1.500 7.500L7 13l5.500-5.500" fill="none" stroke="#777"/></svg>下载</button>
    <button class="plain w27" aria-label="内核"><svg width="16" height="16" viewBox="0 0 16 16"><path d="M3 9h10q0-6-5-6-6 1-6 7 1 5 6 4 3 0 5-3M2 13Q0 16 4 9q5-9 10-8" fill="none" stroke="#777"/></svg></button>
    <button class="plain w27" aria-label="窗口"><svg width="14" height="14" viewBox="0 0 14 14"><path d="M4.500 2.500h8v8h-8zM1.500 4v8.500H9" fill="none" stroke="#888"/></svg></button>
    <button class="plain w27" aria-label="静音"><svg width="16" height="16" viewBox="0 0 16 16"><path d="M1 5.500h3l4-4v13l-4-4H1zM10.500 5q2 3 0 6M13 3q3 5 0 10" fill="none" stroke="#999"/></svg></button>
    <button class="plain"><svg width="12" height="12"><use href="#mag"/></svg>110%</button>
  </div>
</footer>

<div class="taskbar">
  <button class="plain start" aria-label="开始"><svg width="16" height="16" viewBox="0 0 16 16"><path d="M0 2.500L6.500 1.500v6H0zM7.500 1.300L16 0v7.500H7.500zM0 8.500h6.500v6L0 13.500zM7.500 8.500H16V16l-8.500-1.200z" fill="#fff"/></svg></button>
  <label class="cortana"><svg width="22" height="22" viewBox="0 0 22 22"><circle cx="11" cy="11" r="9" fill="none" stroke="#fff" stroke-width="2.500"/></svg><input placeholder="在这里输入你要搜索的内容"><svg width="12" height="18" viewBox="0 0 12 18"><rect x="3.500" y="1" width="5" height="10" rx="1.500" fill="none" stroke="#aaa"/><path d="M1 8v5h10V8M6 13v4M4 17h4" fill="none" stroke="#aaa"/></svg></label>
  <div class="apps">
    <button class="plain w51" aria-label="任务视图"><svg width="22" height="16" viewBox="0 0 22 16"><path d="M5.500 1.500h11v13h-11zM4 3H1.500v10H4M18 3h2.500v10H18" fill="none" stroke="#fff"/></svg></button>
    <button class="plain w51" aria-label="应用"><svg width="22" height="22" viewBox="0 0 22 22"><g fill="#e4e4e4"><path d="M11 10H5Q0 9 0 5q1-5 6-5 5 1 5 5z"/><path d="M12 11V5q1-5 5-5 5 1 5 6-1 5-5 5z"/><path d="M11 12h6q5 1 5 5-1 5-6 5-5-1-5-5z"/><path d="M10 11v6q-1 5-5 5-5-1-5-6 1-5 5-5z"/></g></svg></button>
    <button class="plain w51" aria-label="浏览器"><svg width="22" height="22" viewBox="0 0 22 22"><path d="M5 12h14q0-8-8-8-7 1-7 8 1 7 8 7 5 0 7-4" fill="none" stroke="#e4e4e4" stroke-width="3.500"/><path d="M3 21Q-2 22 5 12q7-10 15-11 2 0 0 3" fill="none" stroke="#e4e4e4" stroke-width="1.500"/></svg></button>
    <button class="plain w51" aria-label="广联达"><svg width="20" height="20" viewBox="0 0 20 20"><path d="M19 2q-2 4-7 1-9-1-10.500 7Q2 18 10 18.500q7 0 7.500-7Q16 7 11 8q-3 2-2 5 3 3 5 0M14 5Q6 3 5 10q1 6 6 6 4-1 4-4" fill="none" stroke="#ddd"/></svg></button>
    <button class="plain w51" aria-label="Edge"><svg width="22" height="22" viewBox="0 0 22 22"><path d="M1 10Q3 0 12 0q9 1 9 13H8q1 5 6 5 4 0 6-2v4q-3 2-8 2-9-1-9-9 1-5 6-7-1 2-1 4h7q0-5-5-5-6 0-9 5z" fill="#0a78d7"/></svg></button>
    <button class="plain w48" aria-label="IE"><svg width="26" height="24" viewBox="0 0 26 24"><path d="M6 13h15q0-8-8-8-7 1-7 8 1 7 8 7 5 0 7-4" fill="none" stroke="#3ba4ea" stroke-width="4"/><path d="M3 22Q-1 22 6 12q9-11 17-11 3 1 0 6" fill="none" stroke="#f4cf32" stroke-width="2.200"/></svg></button>
    <button class="plain w48 run" aria-label="资源管理器"><svg width="22" height="20" viewBox="0 0 22 20"><path d="M1 1h7l2 2h11v15H1z" fill="#fbd774"/><path d="M1 5h20v13H1z" fill="#ffe9a0"/><path d="M5 12h13v7h-4v-4H9v4H5z" fill="#35a7dd"/></svg></button>
    <button class="plain w48 run" aria-label="便笺"><svg width="24" height="24" viewBox="0 0 24 24"><rect width="24" height="24" rx="2" fill="#f59a1c"/><path d="M3 5l13-1 3 15-14 1z" fill="#fff4d5"/><path d="M6 8h8M6 11h9M7 14h8" stroke="#b57b3c"/><path d="M20 2l2 2-8 12-2 1v-3z" fill="#b34415"/></svg></button>
    <button class="plain w48 run" aria-label="广联达客户端"><svg width="24" height="24" viewBox="0 0 24 24"><path d="M23 1q-2 7-10 4-6 1-6 7 1 6 6 6 5-1 5-5l-4-2q5-4 8 3-1 6-5 7l-1 2-3-1-3 1-2-2H5l-1-3q-4-3-3-8Q3 0 14 1q5 1 9 0z" fill="#189be8"/></svg></button>
    <button class="plain w48 run" aria-label="服务"><svg width="24" height="24" viewBox="0 0 24 24"><rect width="24" height="24" rx="4" fill="#1290f0"/><path d="M9 6q3-4 5 0-2 2-2 5v5q-1 4-4 2M4 10q1 4 8 3 6-3 8 0 0 2-2 2" fill="none" stroke="#fff" stroke-width="2.200"/></svg></button>
    <button class="plain w48 run active" aria-label="360浏览器"><svg width="24" height="24" viewBox="0 0 24 24"><circle cx="12" cy="12" r="10.500" fill="#5cb531" stroke="#eaf7df" stroke-width="1.500"/><path d="M8 12h8q0-5-4-5-5 1-5 5 1 5 5 5 3 0 4-2" fill="none" stroke="#fff" stroke-width="2.500"/><path d="M1 21Q4 6 21 1" fill="none" stroke="#7ed348" stroke-width="1.800"/></svg></button>
  </div>
  <div class="tray">
    <span class="links">链接</span><span class="cpu">13%<br>CPU使用</span>
    <button class="plain w24" aria-label="显示隐藏图标"><svg width="14" height="8" viewBox="0 0 14 8"><path d="M1 7l6-6 6 6" fill="none" stroke="#fff" stroke-width="1.300"/></svg></button>
    <button class="plain w24" aria-label="电池"><svg width="18" height="14" viewBox="0 0 18 14"><path d="M5.500 4.500h10v7h-10z" fill="none" stroke="#fff"/><path d="M8 6h6v4H8z" fill="#fff"/><path d="M16 7h1.500v3H16zM0 3h5M1 0v3M4 0v3M.5 3v3h4V3M2.500 6v4H5" fill="none" stroke="#fff"/></svg></button>
    <button class="plain w24" aria-label="网络"><svg width="14" height="14" viewBox="0 0 14 14"><path d="M1 13Q1 3 13 2M4 13q0-7 9-8M7 13q0-4 6-5M10 13q0-2 3-2" fill="none" stroke="#ddd"/></svg></button>
    <button class="plain w24" aria-label="音量"><svg width="16" height="14" viewBox="0 0 16 14"><path d="M1 4.500h2l4-3v11l-4-3H1zM9 5q2 2 0 4M11 3q3 4 0 8M13 1q4 6 0 12" fill="none" stroke="#eee"/></svg></button>
    <button class="plain w30" aria-label="键盘"><svg width="24" height="14" viewBox="0 0 24 14"><path d="M.5.500h23v13H.5z" fill="none" stroke="#fff"/><path d="M3 4h18M3 7h18" stroke="#fff" stroke-dasharray="2 1"/><path d="M5 10.500h14" stroke="#fff"/></svg></button>
    <span class="ime">中</span>
    <button class="plain w30" aria-label="搜狗"><svg width="16" height="16" viewBox="0 0 16 16"><path d="M1 2l13-2 2 13-14 3z" fill="#f0481c"/><path d="M12 3.500Q5 2 5 5.500q0 2 4 2.500 4 1 2 3.500-3 2-7 .5" fill="none" stroke="#fff" stroke-width="2.200"/></svg></button>
    <time>21:50<br>2018/6/20</time>
    <button class="plain note-btn" aria-label="通知"><svg width="17" height="17" viewBox="0 0 17 17"><path d="M.5 1.500h16v11H11l-3 3-3-3H.5z" fill="none" stroke="#fff"/></svg></button>
  </div>
</div>
<script src="app.js"></script>
</body>
</html>
```
FILE: styles.css
```css
* { box-sizing: border-box; }
body { margin: 0; height: 100vh; overflow: hidden; display: flex; flex-direction: column; background: #fff; color: #444; font: 12px/16px "Noto Sans", "Noto Sans CJK SC", sans-serif; }
button, input, select { font: inherit; color: inherit; }
svg { flex: none; display: block; }
a { color: inherit; text-decoration: none; }
.sprite { position: absolute; width: 0; height: 0; }
.plain { border: 0; background: none; padding: 0; display: flex; align-items: center; justify-content: center; }
.sep { width: 1px; height: 20px; background: #d5d5d5; flex: none; }
.grey { color: #888; }
.cr { color: #777; }

/* browser chrome */
.browser { position: relative; flex: none; }
.titlebar { position: relative; display: flex; height: 31px; padding-left: 70px; background: #ebebeb; border-bottom: 1px solid #c8c8c8; }
.tab { display: flex; align-items: center; width: 232px; height: 31px; padding: 0 9px; gap: 4px; background: #fff; border: 1px solid #c8c8c8; border-bottom: 0; }
.tab-title { flex: 1; overflow: hidden; white-space: nowrap; color: #555; -webkit-mask-image: linear-gradient(90deg, #000 85%, transparent 98%); mask-image: linear-gradient(90deg, #000 85%, transparent 98%); }
.newtab { width: 32px; }
.speed { position: absolute; right: 310px; top: -29px; width: 48px; height: 48px; border-radius: 50%; background: #3cc45f; border: 2px solid #e9e9e9; box-shadow: 0 1px 4px #777; color: #fff; font-size: 12px; font-weight: 700; text-align: center; padding-top: 26px; }
.winbtns { display: flex; margin-left: auto; }
.winbtns .plain { width: 37px; }
.logo { position: absolute; left: 12px; top: 7px; }
.addressbar { display: flex; align-items: center; height: 38px; padding: 0 5px 0 62px; border-bottom: 1px solid #e1e1e1; }
.addressbar > .plain { width: 36px; flex: none; }
.addressbar > .c22 { width: 22px; }
.addressbar > .c38 { width: 38px; }
.addressbar > .c48 { width: 48px; }
.addressbar > .c32 { width: 32px; }
.url-sep { margin: 0 8px 0 12px; }
.search-sep { margin-left: 9px; }
.url { flex: 1; padding-left: 5px; font-family: "Open Sans", "Noto Sans CJK SC", sans-serif; font-size: 16px; line-height: 22px; color: #888; white-space: nowrap; overflow: hidden; }
.url b { font-weight: 400; color: #000; }
.bigpics { display: flex; align-items: center; gap: 7px; height: 20px; padding: 0 7px 0 9px; margin-right: 7px; border: 1px solid #4fcb7c; background: #62dc8c; color: #fff; white-space: nowrap; flex: none; }
.search { width: 166px; border: 0; padding: 0 0 0 12px; font-size: 14px; background: none; }
.bookmarks { display: flex; align-items: center; height: 30px; padding-left: 16px; gap: 10px; border-bottom: 1px solid #ddd; white-space: nowrap; overflow: hidden; }
.bookmarks .hide { margin-right: 9px; }
.bookmarks a { display: flex; align-items: center; gap: 2px; }
.bookmarks .pad { padding-right: 7px; }
.drop { margin-left: 2px; color: #999; }
.page { margin-right: 2px; }
.more { margin-left: 8px; }
.tools { display: flex; margin-left: auto; padding-right: 4px; }
.tools .plain { gap: 6px; }
.c34 { width: 34px; }
.c40 { width: 40px; }
.c28 { width: 28px; }

/* sidebar and viewport */
.workspace { flex: 1; min-height: 0; display: flex; }
.rail { flex: none; width: 41px; display: flex; flex-direction: column; align-items: center; gap: 17px; padding: 19px 1px 7px 0; background: #f5f7f7; border-right: 2px solid #e4e4e4; }
.rail .add { margin-top: auto; }
.viewport { flex: 1; min-width: 0; display: grid; grid-template-columns: minmax(0, 1fr) 17px; grid-template-rows: minmax(0, 1fr) 17px; }
.pagewrap { position: relative; overflow: hidden; display: flex; }
.answer { flex: 1; min-width: 0; padding-left: 50px; }
.side { flex: none; width: 296px; padding-left: 42px; border-left: 1px solid #ddd; }
.vbar, .hbar { display: flex; align-items: center; background: #f1f1f1; }
.vbar { flex-direction: column; padding: 6px 0; }
.vbar i { width: 13px; height: 86px; background: #c1c1c1; margin: 129px 0 auto; }
.hbar { padding: 0 5px; gap: 5px; }
.hbar i { flex: 0 1 1233px; height: 13px; background: #c1c1c1; margin-right: auto; }
.corner { background: #dcdcdc; }

/* embedded software picture */
.shot { position: relative; width: 704px; margin: 0; color: #111; font-size: 11px; font-weight: 500; }
.shot button { display: flex; align-items: center; gap: 3px; padding: 0; border: 0; background: none; white-space: nowrap; flex: none; }
.shot .cr { color: #222; }
.cad { display: grid; grid-template-columns: 30px 650px 24px; }
.stage { display: flex; flex-direction: column; }
.topbar { display: flex; align-items: flex-end; gap: 5px; height: 10px; padding-left: 7px; overflow: hidden; background: #f1f1f1; font-size: 10px; line-height: 12px; white-space: nowrap; }
.topbar b { display: flex; align-items: flex-end; gap: 3px; height: 16px; padding-bottom: 4px; font-weight: 500; }
.topbar .on { height: 18px; padding: 0 3px 3px 2px; margin-bottom: 2px; margin-right: 8px; background: #e5f1fd; border: 1px solid #5a9fe0; }
.topbar i { width: 1px; height: 8px; background: #ccc; }
.topbar .well { width: 47px; height: 10px; margin-left: 12px; background: #fff; }
.drawing text { font-family: "Noto Sans", sans-serif; font-weight: 400; }
.drawing .axis { font-size: 14px; }
.drawing .dim { font-size: 20px; }
.drawing .lbl { font-size: 18px; }
.snapbar { display: flex; align-items: center; height: 19px; padding: 2px 0 0 4px; background: #f4f4f4; font-size: 10px; overflow: hidden; white-space: nowrap; }
.snapbar button { height: 18px; gap: 3px; padding: 0 2px; border: 1px solid transparent; }
.snapbar .on { background: #e2effc; border-color: #4f9ee8; }
.grip { height: 14px; border-left: 2px dotted #aaa; margin: 0 3px 0 7px; }
.snapbar .grip:first-child { margin: 0 2px 0 0; }
.snapbar select, .floor select { appearance: none; border: 0; padding: 0 2px; background: #fff; font-weight: 500; }
.snapbar select { width: 42px; }
.snapbar > .cr { margin-right: 7px; }
.num { display: flex; align-items: center; gap: 2px; padding-left: 2px; color: #777; font-size: 11px; }
.num input { width: 49px; height: 19px; padding: 0 14px 0 0; border: 1px solid #777; text-align: right; background: #f7f7f7; color: #888; }
.num svg { margin: 0 3px 0 -11px; }
.chevs { margin-left: auto; padding: 0 4px 6px 0; font-size: 14px; }
.rows { border-collapse: separate; border-spacing: 0; align-self: start; margin-left: 3px; width: 21px; font-size: 10px; line-height: 15px; }
.rows td { height: 16px; padding: 0; text-align: center; background: #f3f3f3; border-bottom: 1px solid #aaa; }
.rows td + td { width: 3px; background: #fff; border: 0; }
.rows .cut td { height: 6px; line-height: 5px; overflow: hidden; }
.rows .sel td { background: #fcd592; color: #733; }
.rows .sel td + td { background: #3a99f4; }
.note { position: absolute; left: 408px; top: 94px; color: #f00; font-size: 23px; line-height: 26px; font-weight: 500; white-space: nowrap; }

.lower { background: #f0f0f0; height: 123px; overflow: hidden; display: flex; flex-direction: column; }
.menubar { display: flex; align-items: flex-end; gap: 14px; height: 4px; overflow: hidden; white-space: nowrap; line-height: 12px; }
.toolrow { display: flex; align-items: center; gap: 8px; height: 34px; padding-left: 19px; background: linear-gradient(#efefef, #f7f7f7); white-space: nowrap; overflow: hidden; flex: none; }
.toolrow.first { padding-top: 3px; }
.toolrow .lead, .toolrow .chev2 { font-size: 15px; line-height: 10px; padding-bottom: 8px; }
.toolrow .chev2 { padding-left: 6px; }
.toolrow .off { color: #888; }
.toolrow .boxed { height: 22px; padding: 0 3px; gap: 5px; border: 1px solid #777; }
.panes { flex: 1; display: flex; gap: 5px; min-height: 0; }
.leftpane { width: 45px; flex: none; }
.leftpane .cap { height: 14px; padding-left: 15px; border: 1px solid #999; border-left: 0; background: #f5f5f5; }
.leftpane p { height: 21px; margin: 0; border-right: 1px solid #999; border-bottom: 1px solid #aaa; }
.leftpane p:last-child { height: 29px; background: linear-gradient(#fff, #eee); }
.rightpane { flex: 1; min-width: 0; display: flex; flex-direction: column; }
.toolrow.second { height: 27px; padding-left: 3px; gap: 7px; background: #f4f4f4; }
.floor { display: flex; align-items: center; gap: 6px; padding-left: 3px; border-left: 1px solid #bbb; }
.floor select { width: 44px; }
.toolrow .bar { border-left: 1px solid #bbb; padding-left: 5px; }
.split { flex: 1; display: flex; gap: 4px; }
.tree { width: 173px; padding-top: 4px; border-right: 2px solid #aaa; }
.find { display: flex; align-items: center; justify-content: space-between; height: 24px; padding-right: 4px; }
.find input { width: 149px; height: 22px; padding: 0 3px; border: 1px solid #ccd; background: #fff; font-size: 12px; }
.nodes { height: 34px; padding: 1px 0 0 8px; background: #fff; border: 1px solid #889; font-size: 11px; }
.node { display: flex; align-items: center; gap: 4px; height: 15px; }
.leafnode { padding-left: 30px; }
.leafnode span { display: flex; align-items: center; gap: 4px; width: 115px; padding-left: 2px; background: #316ac5; }
.props { flex: 1; min-width: 0; background: #fff; }
.tabs { height: 20px; border-bottom: 1px solid #999; }
.tabs span { display: inline-block; height: 20px; padding: 1px 6px; background: #fff; border: 1px solid #888; border-bottom: 0; }
.props table { border-collapse: collapse; table-layout: fixed; width: 348px; margin: 4px 0 0 3px; }
.props th, .props td { height: 22px; padding: 0; border: 1px solid #bbb; font-weight: 500; background: #f6f6f6; }
.props th:first-child { width: 21px; }
.props th:nth-child(3) { width: 119px; }
.props th:nth-child(4) { width: 29px; }
.props .hot { background: #f4c873; color: #7a1540; }
.props td { height: 18px; background: #fff; }
.props .n { background: #fcd592; text-align: center; }
.props .name { background: #3399ff; color: #fff; padding-left: 18px; }
.props .val { background: #e0efff; padding-left: 2px; }

/* right column */
.app { display: flex; justify-content: space-between; width: 271px; height: 101px; padding: 7px 15px 0; border: 1px solid #ddd; border-top: 0; }
.app h2 { margin: 2px 0 4px; color: #444; font-size: 20px; line-height: 28px; font-weight: 400; white-space: nowrap; }
.app p { margin: 0; width: 108px; color: #999; font-size: 15px; line-height: 22px; }
.banner { display: block; width: 300px; margin-top: 33px; border: 1px solid #ddd; overflow: hidden; }
.banner .site { font-family: "Open Sans", sans-serif; }
.floaters { position: absolute; right: 22px; top: 269px; display: flex; flex-direction: column; gap: 11px; }
.floaters button { width: 44px; height: 44px; border: 0; padding: 0 0 4px; background: #ff6c0a; color: #fff; font-size: 15px; line-height: 19px; }
.floaters .totop { display: flex; align-items: center; justify-content: center; padding: 0; background: #bdbdbd; }

/* status bar */
.status { flex: none; display: flex; align-items: center; height: 24px; padding: 0 5px 0 10px; border-top: 1px solid #c8c8c8; white-space: nowrap; overflow: hidden; }
.pick { display: flex; align-items: center; gap: 6px; }
.dd { margin: 0 6px 0 29px; }
.news { text-decoration: underline; text-underline-offset: 2px; }
.st { display: flex; align-items: center; margin-left: auto; color: #777; gap: 11px; }
.st .plain { gap: 6px; }
.st .w27 { width: 27px; }

/* taskbar */
.taskbar { flex: none; display: flex; height: 40px; background: #010b0d; color: #fff; white-space: nowrap; }
.start { width: 48px; background: #000; }
.cortana { display: flex; align-items: center; width: 343px; padding: 0 14px 0 9px; background: #333; }
.cortana input { flex: 1; min-width: 0; border: 0; background: none; padding: 0 5px; font-size: 14px; }
.cortana input::placeholder { color: #a3a3a3; }
.find input::placeholder { color: #777; }
.apps, .tray { display: flex; }
.w51 { width: 51px; }
.w48 { width: 48px; }
.run { background: linear-gradient(#76b9ed, #76b9ed) center bottom / 39px 2px no-repeat; }
.run.active { background: linear-gradient(#76b9ed, #76b9ed) center bottom / 100% 2px no-repeat #353f43; }
.tray { margin-left: auto; align-items: center; }
.links { margin-right: 22px; }
.cpu, time { text-align: center; line-height: 18px; }
.cpu { margin-right: 14px; }
.w24 { width: 24px; }
.w30 { width: 30px; }
.ime { width: 26px; text-align: center; font-size: 13px; }
time { width: 80px; }
.note-btn { width: 32px; margin-right: 17px; }
```
FILE: app.js
```js
// Fills the download code: three finder squares plus data modules.
const SIZE = 29;
let seed = 20187;
const next = () => (seed = (seed * 1103515245 + 12345) % 2147483648) / 2147483648;
const corners = [[0, 0], [SIZE - 7, 0], [0, SIZE - 7]];

function module(x, y) {
  for (const [cx, cy] of corners) {
    const dx = x - cx, dy = y - cy;
    if (dx >= -1 && dx <= 7 && dy >= -1 && dy <= 7) {
      const ring = Math.max(Math.abs(dx - 3), Math.abs(dy - 3));
      return ring === 3 || ring <= 1;
    }
  }
  return next() > 0.48;
}

let d = "";
for (let y = 0; y < SIZE; y++) {
  for (let x = 0; x < SIZE; x++) {
    if (module(x, y)) d += `M${x} ${y}h1v1h-1z`;
  }
}
document.getElementById("qr").setAttribute("d", d);
```
